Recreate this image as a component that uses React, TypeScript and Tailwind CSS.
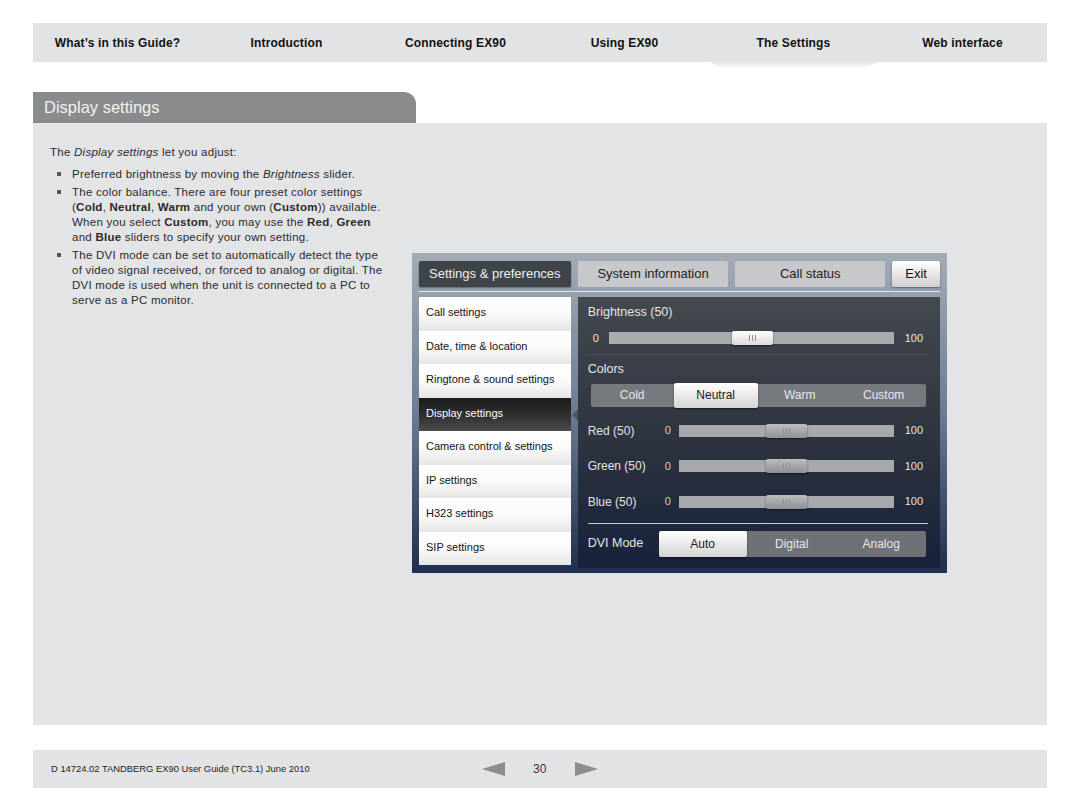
import React from "react";

const navItems = [
  "What\u2019s in this Guide?",
  "Introduction",
  "Connecting EX90",
  "Using EX90",
  "The Settings",
  "Web interface",
];

const menu = [
  "Call settings",
  "Date, time & location",
  "Ringtone & sound settings",
  "Display settings",
  "Camera control & settings",
  "IP settings",
  "H323 settings",
  "SIP settings",
];

function Grips() {
  return (
    <>
      <span className="w-px h-[6px] bg-[#8f8f8f]" />
      <span className="w-px h-[6px] bg-[#8f8f8f]" />
      <span className="w-px h-[6px] bg-[#8f8f8f]" />
    </>
  );
}

function ColorSlider({ label }: { label: string }) {
  return (
    <div className="flex items-center h-[12px]">
      <span className="w-[77px] text-[12px] text-[#e4e4e4]">{label}</span>
      <span className="w-[14px] text-[11px] text-[#cfcfcf]">0</span>
      <div className="relative w-[215px] h-[12px] bg-[#a7a9ac]">
        <div
          className="absolute top-[-1px] h-[14px] w-[41px] rounded-[2px] flex items-center justify-center gap-[2px] bg-gradient-to-b from-[#bdbdbf] to-[#8e9195] shadow-[0_1px_2px_rgba(0,0,0,0.5)]"
          style={{ left: 87 }}
        >
          <Grips />
        </div>
      </div>
      <span className="ml-[11px] text-[11px] text-[#e4e4e4]">100</span>
    </div>
  );
}

function Bullet({ children }: { children: React.ReactNode }) {
  return (
    <li className="flex">
      <span className="w-[22px] flex-none pl-[7px] pt-[5px]">
        <span className="block w-[4px] h-[4px] bg-[#555]" />
      </span>
      <span className="whitespace-nowrap">{children}</span>
    </li>
  );
}

export default function App() {
  return (
    <div
      className="w-[1080px] h-[811px] bg-white relative overflow-hidden"
      style={{ fontFamily: '"Liberation Sans", Arial, sans-serif' }}
    >
      {/* Top navigation */}
      <div className="mt-[23px] mx-[33px] h-[39px] bg-[#e2e3e5] grid grid-cols-6">
        {navItems.map((n, i) => (
          <div key={n} className="relative flex items-center justify-center">
            <span className="text-[12px] font-bold text-[#111] tracking-[0.15px]">{n}</span>
            {i === 4 && (
              <div className="absolute left-0 right-0 top-[39px] h-[6px] bg-gradient-to-b from-[#e6e7e9] to-[#fafafa] [clip-path:polygon(0_0,100%_0,92%_100%,8%_100%)]" />
            )}
          </div>
        ))}
      </div>

      {/* Heading tab */}
      <div className="mt-[30px] ml-[33px] w-[383px] h-[31px] bg-[#8a8b8d] rounded-tr-[12px] flex items-center pl-[11px]">
        <span className="text-[16.5px] text-[#f2f2f2] font-light">Display settings</span>
      </div>

      {/* Content */}
      <div className="mx-[33px] h-[602px] bg-[#e3e4e6] flex">
        <div className="w-[379px] pl-[17px] pt-[22px] text-[11.5px] leading-[15px] tracking-[0.25px] text-[#2a2a2a]">
          <p className="mb-[7px]">
            The <i>Display settings</i> let you adjust:
          </p>
          <ul className="flex flex-col gap-[3px]">
            <Bullet>
              Preferred brightness by moving the <i>Brightness</i> slider.
            </Bullet>
            <Bullet>
              The color balance. There are four preset color settings
              <br />(<b>Cold</b>, <b>Neutral</b>, <b>Warm</b> and your own (<b>Custom</b>)) available.
              <br />When you select <b>Custom</b>, you may use the <b>Red</b>, <b>Green</b>
              <br />and <b>Blue</b> sliders to specify your own setting.
            </Bullet>
            <Bullet>
              The DVI mode can be set to automatically detect the type
              <br />of video signal received, or forced to analog or digital. The
              <br />DVI mode is used when the unit is connected to a PC to
              <br />serve as a PC monitor.
            </Bullet>
          </ul>
        </div>

        {/* Screenshot panel */}
        <div className="mt-[130px] w-[535px] h-[320px] bg-gradient-to-b from-[#a4acb6] via-[#6c7c93] to-[#1f2e4e] pt-[8px] px-[7px]">
          {/* Tabs */}
          <div className="flex gap-[7px] h-[26px]">
            <div className="w-[152px] bg-[#3f4448] rounded-[2px] flex items-center justify-center pb-[1px] text-[13px] text-[#eeeeee] shadow-[0_1px_2px_rgba(0,0,0,0.4)]">
              Settings &amp; preferences
            </div>
            <div className="w-[151px] bg-[#c6c8cb] rounded-[2px] flex items-center justify-center pb-[1px] text-[13px] text-[#222]">
              System information
            </div>
            <div className="w-[150px] bg-[#c6c8cb] rounded-[2px] flex items-center justify-center pb-[1px] text-[13px] text-[#222]">
              Call status
            </div>
            <div className="w-[48px] bg-gradient-to-b from-[#ffffff] to-[#cfcfcf] rounded-[2px] flex items-center justify-center pb-[1px] text-[13px] text-[#111] shadow-[0_1px_2px_rgba(0,0,0,0.4)]">
              Exit
            </div>
          </div>
          <div className="mt-[4px] h-px bg-[#dfe4ea]" />
          <div className="mt-[5px] flex gap-[7px]">
            {/* Left menu */}
            <div className="w-[152px] flex flex-col">
              {menu.map((m) =>
                m === "Display settings" ? (
                  <div
                    key={m}
                    className="relative h-[33.5px] bg-gradient-to-b from-[#1c1c1c] via-[#2e2e2e] to-[#4d4d4d] flex items-center pl-[7px] pb-[3px] text-[11px] text-white"
                  >
                    {m}
                    <div className="absolute right-[-7px] top-[11px] w-0 h-0 border-y-[6px] border-y-transparent border-r-[6px] border-r-[#50555b]" />
                  </div>
                ) : (
                  <div
                    key={m}
                    className="h-[33.5px] bg-gradient-to-b from-[#ffffff] via-[#fafafa] to-[#e6e6e6] flex items-center pl-[7px] pb-[3px] text-[11px] text-[#151515]"
                  >
                    {m}
                  </div>
                )
              )}
            </div>

            {/* Right panel */}
            <div className="w-[363px] h-[271px] bg-gradient-to-b from-[#44494e] via-[#2f3540] to-[#17213a] pl-[10px] pr-[12px] pt-[6px]">
              <div className="text-[12.5px] text-[#e6e6e6]">Brightness (50)</div>
              <div className="mt-[10px] flex items-center h-[12px]">
                <span className="w-[21px] pl-[5px] text-[11px] text-[#e4e4e4]">0</span>
                <div className="relative w-[285px] h-[12px] bg-[#a9abae]">
                  <div
                    className="absolute top-[-1px] h-[14px] w-[41px] rounded-[2px] flex items-center justify-center gap-[2px] bg-gradient-to-b from-[#ffffff] to-[#dadada] shadow-[0_1px_2px_rgba(0,0,0,0.5)]"
                    style={{ left: 123 }}
                  >
                    <Grips />
                  </div>
                </div>
                <span className="ml-[11px] text-[11px] text-[#e4e4e4]">100</span>
              </div>
              <div className="mt-[10px] h-px bg-[#4c525a]" />
              <div className="mt-[5px] text-[12.5px] text-[#e6e6e6]">Colors</div>
              <div className="mt-[5px] ml-[3px] w-[335px] h-[23px] bg-[#767a7f] rounded-[2px] flex text-[12px]">
                <div className="w-[83px] flex items-center justify-center text-[#e6e6e6]">Cold</div>
                <div className="w-[84px] -my-[1px] bg-gradient-to-b from-[#ffffff] to-[#d4d4d4] rounded-[2px] flex items-center justify-center text-[#1a1a1a] shadow-[0_1px_2px_rgba(0,0,0,0.5)]">
                  Neutral
                </div>
                <div className="w-[84px] flex items-center justify-center text-[#e6e6e6]">Warm</div>
                <div className="w-[84px] flex items-center justify-center text-[#e6e6e6]">Custom</div>
              </div>
              <div className="mt-[18px] flex flex-col gap-[23.5px]">
                <ColorSlider label="Red (50)" />
                <ColorSlider label="Green (50)" />
                <ColorSlider label="Blue (50)" />
              </div>
              <div className="mt-[15px] h-px bg-[#c9ccd1]" />
              <div className="mt-[7px] flex items-center h-[26px]">
                <span className="w-[71px] text-[12.5px] text-[#e6e6e6]">DVI Mode</span>
                <div className="w-[267px] h-[26px] bg-[#6e7277] rounded-[2px] flex text-[12px]">
                  <div className="w-[88px] bg-gradient-to-b from-[#ffffff] to-[#d4d4d4] rounded-[2px] flex items-center justify-center text-[#1a1a1a] shadow-[0_1px_2px_rgba(0,0,0,0.5)]">
                    Auto
                  </div>
                  <div className="w-[90px] flex items-center justify-center text-[#e6e6e6]">Digital</div>
                  <div className="w-[89px] flex items-center justify-center text-[#e6e6e6]">Analog</div>
                </div>
              </div>
            </div>
          </div>
        </div>
      </div>

      {/* Footer */}
      <div className="mt-[25px] mx-[33px] h-[38px] bg-[#e2e3e5] flex items-center">
        <span className="ml-[18px] w-[431px] text-[9.4px] text-[#222]">
          D 14724.02 TANDBERG EX90 User Guide (TC3.1) June 2010
        </span>
        <svg width="23" height="14" viewBox="0 0 23 14">
          <polygon points="0,7 23,0 23,14" fill="#8c8c8c" />
        </svg>
        <span className="ml-[28px] w-[42px] text-[12px] text-[#333]">30</span>
        <svg width="23" height="14" viewBox="0 0 23 14">
          <polygon points="23,7 0,0 0,14" fill="#8c8c8c" />
        </svg>
      </div>
    </div>
  );
}
